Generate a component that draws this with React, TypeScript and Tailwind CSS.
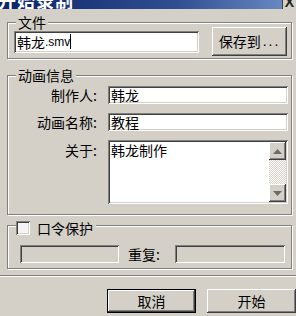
const sunken =
  "shadow-[inset_1px_1px_0_#808080,inset_-1px_-1px_0_#ffffff,inset_2px_2px_0_#404040,inset_-2px_-2px_0_#d4d0c8]";
const raised =
  "shadow-[inset_-1px_-1px_0_#404040,inset_1px_1px_0_#ffffff,inset_-2px_-2px_0_#808080,inset_2px_2px_0_#d4d0c8]";
const etched =
  "border border-[#808080] shadow-[inset_1px_1px_0_#ffffff,1px_1px_0_#ffffff]";

function Arrow({ up }: { up?: boolean }) {
  return (
    <svg width="9" height="5" viewBox="0 0 9 5">
      {up ? (
        <polygon points="4.5,0 9,5 0,5" fill="#6b6b6b" />
      ) : (
        <polygon points="0,0 9,0 4.5,5" fill="#6b6b6b" />
      )}
    </svg>
  );
}

export default function App() {
  return (
    <div className="w-[296px] h-[316px] overflow-hidden bg-[#d4d0c8] text-black text-[14px] font-['Noto_Sans_CJK_SC',sans-serif] flex flex-col">
      {/* title bar */}
      <div className="h-[9px] shrink-0 flex items-end overflow-hidden bg-[linear-gradient(90deg,#0c2468,#2f4f92_60%,#6f8fc8)]">
        <div className="flex-1 -ml-[2px] text-white font-bold text-[18px] leading-[18px] tracking-[1px]">
          开始录制
        </div>
        <div className="w-[14px] h-[9px] self-start bg-[#d4d0c8] border-l border-[#404040] flex items-end justify-center overflow-hidden">
          <span className="font-bold text-[14px] leading-[14px] font-['Liberation_Sans',sans-serif] text-[#202020]">
            X
          </span>
        </div>
      </div>

      {/* 文件 */}
      <fieldset className={`mt-[6px] ml-[7px] mr-[4px] pb-[2px] ${etched}`}>
        <legend className="ml-[8px] px-[2px] leading-[14px] bg-[#d4d0c8]">文件</legend>
        <div className="-mt-[2px] flex items-center gap-[13px] pl-[6px] pr-[4px]">
          <div className={`flex-1 h-[22px] bg-white ${sunken} flex items-center pl-[3px] leading-[16px]`}>
            <span>韩龙</span>
            <span className="font-['Liberation_Sans',sans-serif] text-[12px]">.smv</span>
            <span className="w-px h-[15px] bg-black" />
          </div>
          <div className={`w-[75px] h-[29px] bg-[#d4d0c8] ${raised} flex items-center justify-center pb-[1px]`}>
            保存到<span className="font-['Liberation_Sans',sans-serif] tracking-[2px] ml-[2px]">...</span>
          </div>
        </div>
      </fieldset>

      {/* 动画信息 */}
      <fieldset className={`mt-[9px] ml-[7px] mr-[4px] pb-[10px] ${etched}`}>
        <legend className="ml-[8px] px-[2px] leading-[14px] bg-[#d4d0c8]">动画信息</legend>
        <div className="mt-[4px] grid grid-cols-[89px_1fr] gap-x-[11px] gap-y-[9px] pr-[3px]">
          <div className="text-right leading-[18px]">制作人:</div>
          <div className={`h-[18px] bg-white ${sunken} pl-[3px] leading-[18px]`}>韩龙</div>
          <div className="text-right leading-[18px]">动画名称:</div>
          <div className={`h-[18px] bg-white ${sunken} pl-[3px] leading-[18px]`}>教程</div>
          <div className="text-right leading-[18px] pt-[1px]">关于:</div>
          <div className={`h-[64px] bg-white ${sunken} p-[2px] flex`}>
            <div className="flex-1 pl-[1px] leading-[17px]">韩龙制作</div>
            <div className="w-[17px] flex flex-col">
              <div className={`h-[18px] bg-[#d4d0c8] ${raised} flex items-center justify-center`}>
                <Arrow up />
              </div>
              <div className="flex-1 bg-[repeating-conic-gradient(#ffffff_0%_25%,#d4d0c8_0%_50%)] bg-[length:2px_2px]" />
              <div className={`h-[18px] bg-[#d4d0c8] ${raised} flex items-center justify-center`}>
                <Arrow />
              </div>
            </div>
          </div>
        </div>
      </fieldset>

      {/* 口令保护 */}
      <fieldset className={`mt-[3px] ml-[7px] mr-[4px] pb-[5px] ${etched}`}>
        <legend className="ml-[8px] pr-[3px] h-[14px] leading-[14px] bg-[#d4d0c8]">
          <span className="mt-[3px] flex items-center gap-[7px] h-[14px]">
            <span className={`w-[14px] h-[14px] bg-[#f4f4f4] ${sunken}`} />
            <span className="leading-[14px]">口令保护</span>
          </span>
        </legend>
        <div className="mt-[13px] flex items-center pl-[12px] pr-[6px]">
          <div className={`w-[99px] h-[18px] bg-[#d4d0c8] ${sunken}`} />
          <div className="ml-[9px] w-[40px] leading-[18px]">重复:</div>
          <div className={`ml-[7px] flex-1 h-[18px] bg-[#d4d0c8] ${sunken}`} />
        </div>
      </fieldset>

      {/* separator */}
      <div className="mt-[6px] h-[2px] border-t border-t-[#808080] border-b border-b-white" />

      {/* buttons */}
      <div className="mt-[12px] flex justify-end gap-[11px]">
        <div className="w-[89px] h-[24px] border border-black">
          <div className={`w-full h-full bg-[#d4d0c8] ${raised} flex items-center justify-center leading-[16px]`}>
            取消
          </div>
        </div>
        <div className={`w-[89px] h-[24px] bg-[#d4d0c8] ${raised} flex items-center justify-center leading-[16px]`}>
          开始
        </div>
      </div>
    </div>
  );
}
